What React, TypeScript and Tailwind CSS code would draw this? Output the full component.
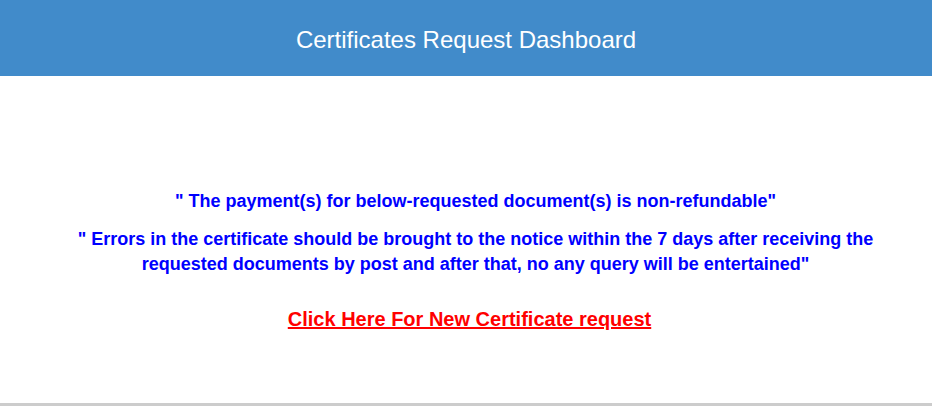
export default function App() {
  return (
    <div className="min-h-[407px] bg-white flex flex-col font-['Liberation_Sans',Arial,sans-serif]">
      {/* Header */}
      <header className="h-[76px] bg-[#418bca] flex items-center justify-center pt-[4px]">
        <h1 className="text-white text-[24px] font-normal">Certificates Request Dashboard</h1>
      </header>

      {/* Notices */}
      <main className="flex-1 flex flex-col items-center pt-[113px] px-[40px] text-center">
        <div className="pl-[19px] flex flex-col items-center">
          <p className="text-[#0000ff] text-[18px] font-bold leading-[25px]">
            " The payment(s) for below-requested document(s) is non-refundable"
          </p>
          <p className="mt-[13px] text-[#0000ff] text-[18px] font-bold leading-[25px] max-w-[810px]">
            " Errors in the certificate should be brought to the notice within the 7 days after receiving the requested
            documents by post and after that, no any query will be entertained"
          </p>
        </div>
        <a href="#" className="mt-[30px] ml-[7px] text-[#ff0000] text-[20px] font-bold underline leading-[25px]">
          Click Here For New Certificate request
        </a>
      </main>

      <div className="h-[3px] bg-[#cccccc] mb-[1px]" />
    </div>
  );
}
